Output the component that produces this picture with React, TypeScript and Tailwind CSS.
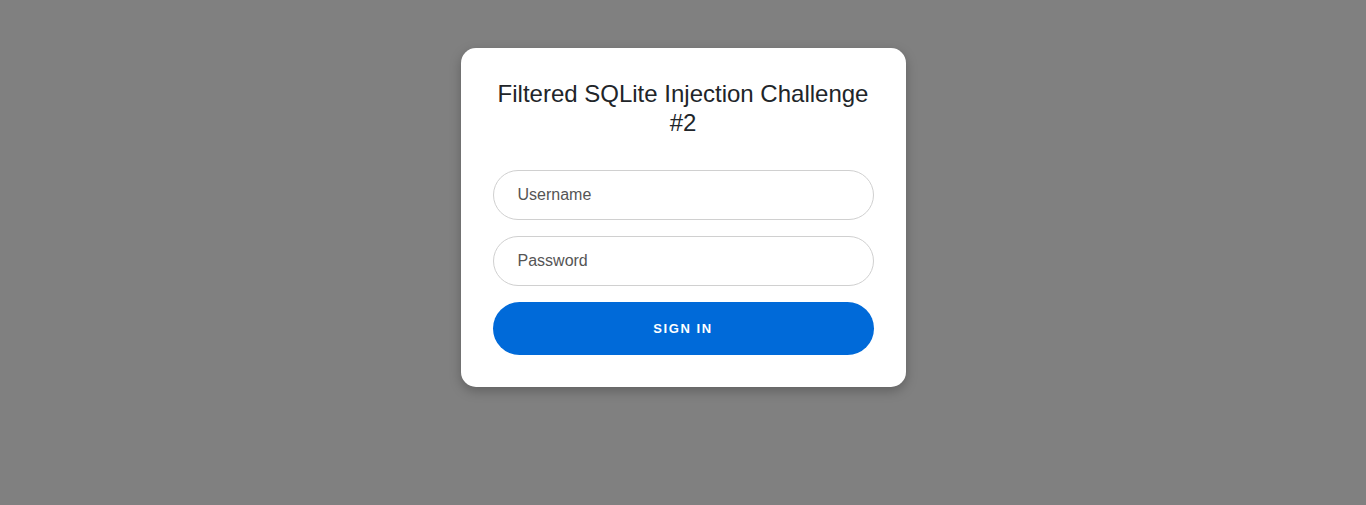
import React from "react";

export default function App() {
  return (
    <div
      className="min-h-[505px] w-full bg-[#808080] flex justify-center items-start pt-12"
      style={{ fontFamily: '"Liberation Sans", Arial, sans-serif' }}
    >
      <div className="w-[445px] bg-white rounded-[15px] p-8 shadow-[0_4px_12px_rgba(0,0,0,0.25)] flex flex-col">
        <h1 className="-mt-px text-[24px] leading-[29px] text-[#212529] text-center font-normal">
          Filtered SQLite Injection Challenge #2
        </h1>
        <div className="mt-[33px] flex flex-col gap-4">
          <input
            type="text"
            placeholder="Username"
            className="h-[50px] w-full rounded-full border border-[#d0d0d0] px-6 text-[16px] text-[#444] placeholder:text-[#555] outline-none"
          />
          <input
            type="password"
            placeholder="Password"
            className="h-[50px] w-full rounded-full border border-[#d0d0d0] px-6 text-[16px] text-[#444] placeholder:text-[#555] outline-none"
          />
          <button className="h-[53px] w-full rounded-full bg-[#006ad9] text-white text-[13px] font-bold tracking-[1.6px] uppercase">
            Sign In
          </button>
        </div>
      </div>
    </div>
  );
}
